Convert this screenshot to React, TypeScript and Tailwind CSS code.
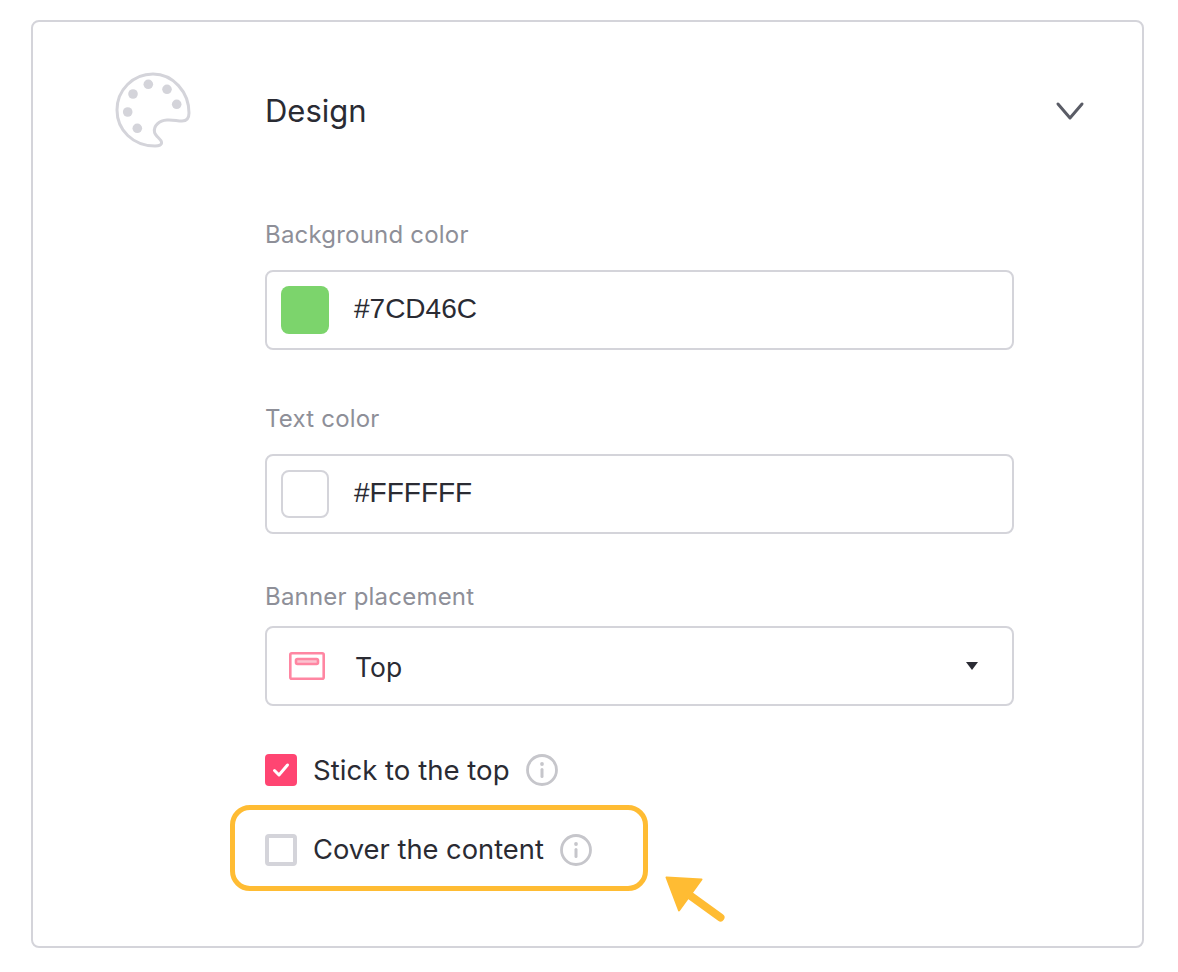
import type { ReactNode } from "react";

const PaletteIcon = () => (
  <svg width="76" height="76" viewBox="0 0 76 76" fill="none" className="shrink-0">
    <path
      d="M38 2C58 2 74 20 74 41C74 46 72 49 67 49C62 49 58 47.5 52 48C44 48.5 38.5 54 39.5 60C40 64 46 67 46.5 70C47 73 44 74 40 74C18 74 2 58 2 38C2 18 18 2 38 2Z"
      stroke="#d4d4da"
      strokeWidth="3"
      strokeLinejoin="round"
    />
    {[
      [33.3, 12.3],
      [18, 22],
      [52, 17.3],
      [61.7, 32.3],
      [12.7, 40],
      [22.3, 56.3],
    ].map(([cx, cy]) => (
      <circle key={cx} cx={cx} cy={cy} r="4.8" fill="#d4d4da" />
    ))}
  </svg>
);

const BannerIcon = () => (
  <svg width="36" height="28" viewBox="0 0 36 28" fill="none" className="shrink-0">
    <rect x="1.3" y="1.3" width="33.4" height="25.4" rx="1.5" stroke="#ff86a2" strokeWidth="2.6" />
    <rect x="7" y="7" width="22" height="5" rx="1.5" fill="#fbc3d0" stroke="#ff86a2" strokeWidth="2.6" />
  </svg>
);

const InfoIcon = () => (
  <svg width="32" height="32" viewBox="0 0 32 32" fill="none" className="shrink-0">
    <circle cx="16" cy="16" r="14.5" stroke="#c6c6cb" strokeWidth="2.8" />
    <circle cx="16" cy="10" r="1.9" fill="#c6c6cb" />
    <rect x="14.5" y="14" width="3" height="10" rx="1.5" fill="#c6c6cb" />
  </svg>
);

const ArrowIcon = () => (
  <svg
    width="64"
    height="50"
    viewBox="0 0 64 50"
    fill="none"
    className="absolute left-[664px] top-[875px]"
  >
    <path d="M2.5 2.5L37.5 4.5L15 35.5Z" fill="#ffbc33" stroke="#ffbc33" strokeWidth="2" strokeLinejoin="round" />
    <path d="M24 19L56.5 42.5" stroke="#ffbc33" strokeWidth="8" strokeLinecap="round" />
  </svg>
);

const Field = ({
  label,
  className,
  gap,
  children,
}: {
  label: string;
  className: string;
  gap: string;
  children: ReactNode;
}) => (
  <div className={className}>
    <div className="text-[24px] leading-[32px] tracking-[0.2px] text-[#8e8f98]">{label}</div>
    <div className={`${gap} flex h-[80px] items-center rounded-[8px] border-2 border-[#d4d4da] pl-[14px] pr-[34px]`}>
      {children}
    </div>
  </div>
);

export default function App() {
  return (
    <div className="relative h-[972px] w-[1178px] bg-white pl-[31px] pt-[20px] font-['Inter',sans-serif] text-[#2a2b33]">
      <div className="h-[928px] w-[1113px] rounded-[8px] border-2 border-[#d4d4da] pl-[82px] pt-[50px]">
        <div className="flex">
          <div className="w-[150px] shrink-0">
            <PaletteIcon />
          </div>
          <div className="w-[749px]">
            <div className="relative flex h-[76px] items-center pt-[2px] text-[31px] leading-[36px]">
              Design
              <svg
                width="30"
                height="20"
                viewBox="0 0 30 20"
                fill="none"
                className="absolute left-[790px] top-[29px]"
              >
                <path d="M3 3L15 17L27 3" stroke="#5a5c66" strokeWidth="3" strokeLinecap="round" strokeLinejoin="round" />
              </svg>
            </div>

            <Field label="Background color" className="mt-[71px]" gap="mt-[19px]">
              <div className="h-[48px] w-[48px] rounded-[8px] bg-[#7cd46c]" />
              <span className="ml-[25px] pb-[2px] font-['Liberation_Sans',sans-serif] text-[28px]">#7CD46C</span>
            </Field>

            <Field label="Text color" className="mt-[53px]" gap="mt-[19px]">
              <div className="h-[48px] w-[48px] rounded-[8px] border-2 border-[#d4d4da] bg-white" />
              <span className="ml-[25px] pb-[2px] font-['Liberation_Sans',sans-serif] text-[28px]">#FFFFFF</span>
            </Field>

            <Field label="Banner placement" className="mt-[47px]" gap="mt-[13px]">
              <div className="ml-[8px]">
                <BannerIcon />
              </div>
              <span className="ml-[30px] pt-[4px] text-[26.5px]">Top</span>
              <div className="ml-auto h-0 w-0 border-x-[6.5px] border-t-[8px] border-x-transparent border-t-[#2a2b33]" />
            </Field>

            <div className="mt-[48px] flex h-[32px] items-center">
              <div className="flex h-[32px] w-[32px] items-center justify-center rounded-[4px] bg-[#ff4572]">
                <svg width="20" height="20" viewBox="0 0 20 20" fill="none">
                  <path d="M3.5 10.5L8 15L16.5 5" stroke="white" strokeWidth="3" strokeLinecap="round" strokeLinejoin="round" />
                </svg>
              </div>
              <span className="ml-[16px] pt-[2px] text-[27.6px]">Stick to the top</span>
              <div className="ml-[16px]">
                <InfoIcon />
              </div>
            </div>

            <div className="-ml-[35px] mt-[19px] flex h-[86px] w-[418px] items-center rounded-[20px] border-[5px] border-[#ffbc33] pl-[30px] pt-[4px]">
              <div className="h-[32px] w-[32px] rounded-[4px] border-4 border-[#d4d4da]" />
              <span className="ml-[16px] text-[27.3px]">Cover the content</span>
              <div className="ml-[16px]">
                <InfoIcon />
              </div>
            </div>
          </div>
        </div>
      </div>
      <ArrowIcon />
    </div>
  );
}
